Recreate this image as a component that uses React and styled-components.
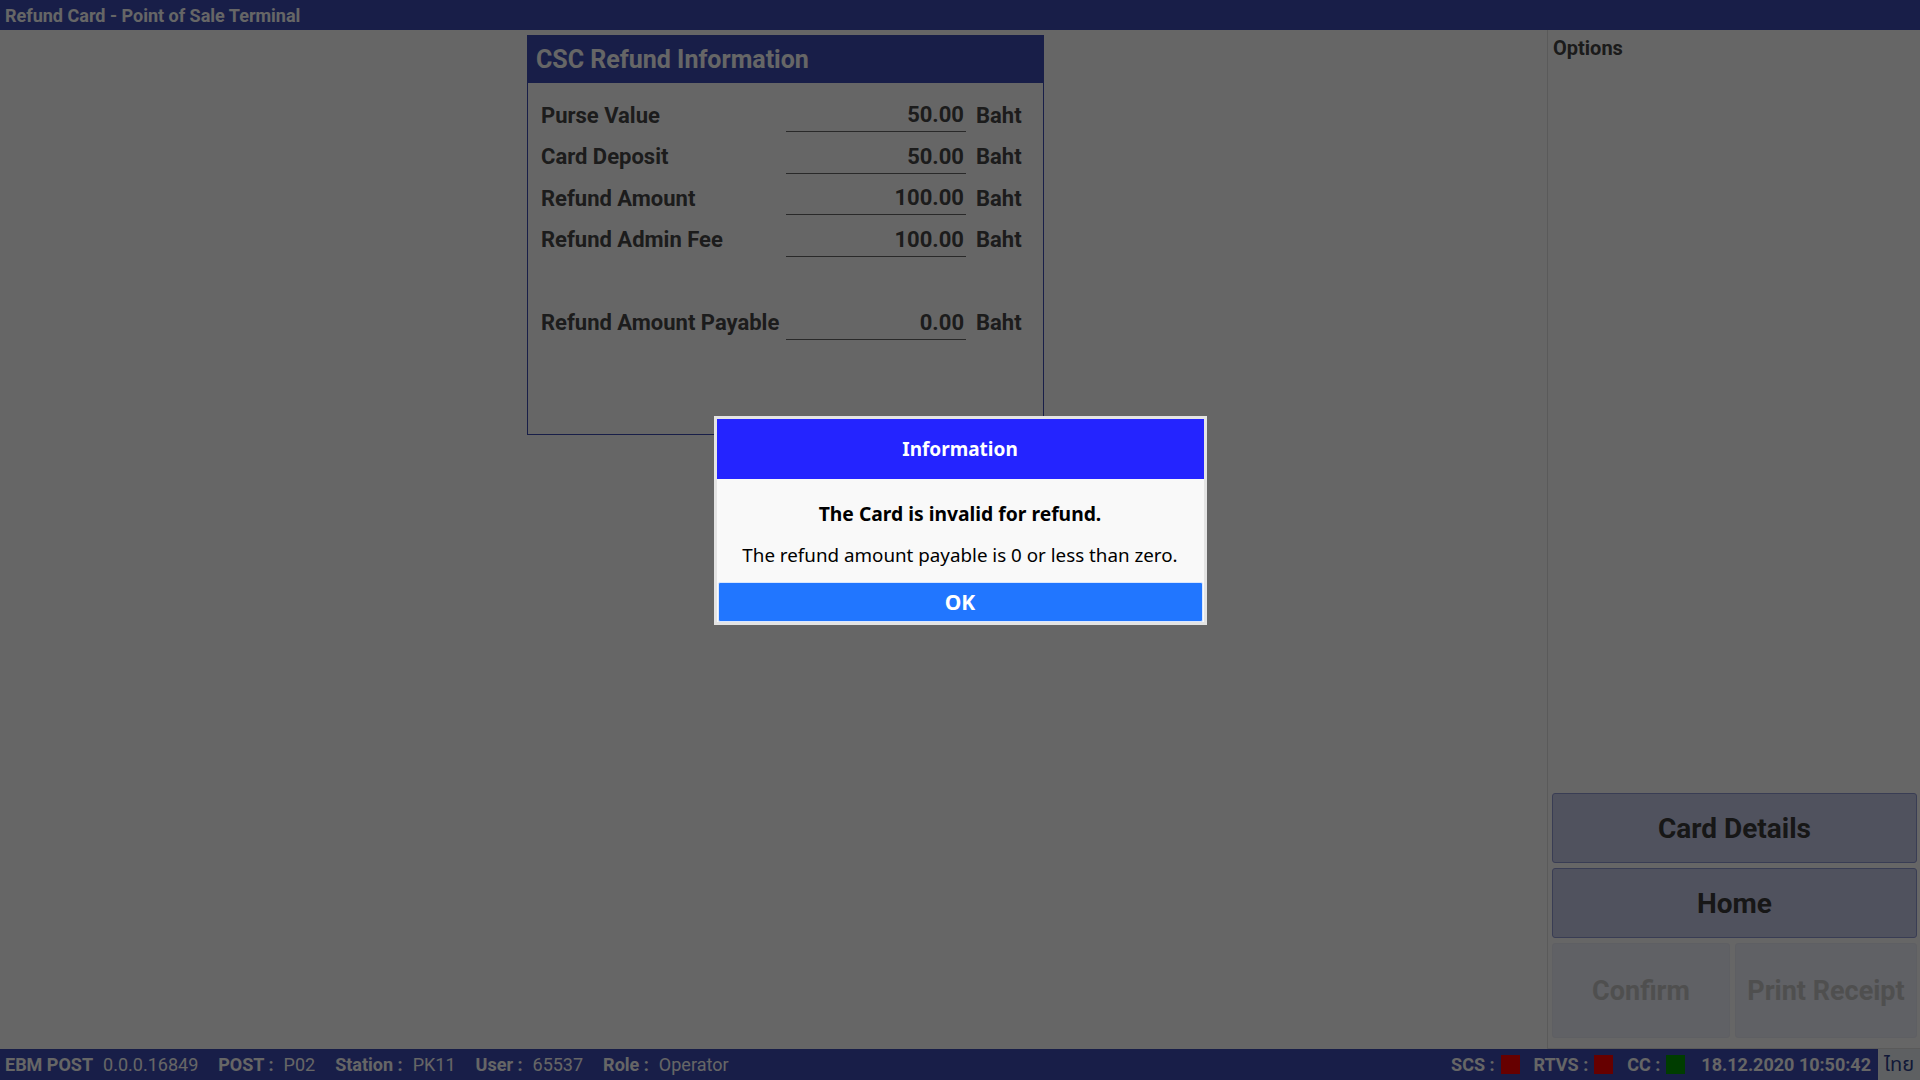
import React from 'react';
import styled, { createGlobalStyle } from 'styled-components';

const GlobalStyle = createGlobalStyle`
  html, body {
    margin: 0;
    padding: 0;
  }
  body {
    font-family: Roboto, "Liberation Sans", sans-serif;
    background: #ffffff;
    overflow: hidden;
  }
  * {
    box-sizing: border-box;
  }
`;

const Screen = styled.div`
  position: relative;
  width: 1920px;
  height: 1080px;
  display: flex;
  flex-direction: column;
  background: #ffffff;
`;

const TitleBar = styled.div`
  height: 30px;
  flex-shrink: 0;
  display: flex;
  align-items: center;
  padding-left: 5px;
  background: #3c4bb4;
  color: #ffffff;
  font-size: 18px;
  font-weight: 700;
`;

const Main = styled.div`
  flex: 1;
  display: flex;
  min-height: 0;
`;

const Content = styled.div`
  flex: 1;
  padding: 5px 0 0 527px;
`;

const Panel = styled.div`
  width: 517px;
  height: 400px;
  border: 1px solid #3c4bb4;
  display: flex;
  flex-direction: column;
`;

const PanelHeader = styled.div`
  height: 47px;
  display: flex;
  align-items: center;
  padding-left: 8px;
  background: #3c4bb4;
  color: #ffffff;
  font-size: 25px;
  font-weight: 700;
`;

const PanelBody = styled.div`
  padding: 15px 0 0 13px;
`;

const Row = styled.div`
  display: grid;
  grid-template-columns: 235px 180px auto;
  column-gap: 10px;
  align-items: center;
  height: 34px;
  margin-bottom: ${p => (p.$last ? '0' : '7.5px')};
  margin-top: ${p => (p.$spaced ? '49px' : '0')};
  font-size: 22px;
  font-weight: 700;
  color: #484848;
`;

const Label = styled.div`
  white-space: nowrap;
`;

const ValueField = styled.div`
  height: 34px;
  display: flex;
  align-items: center;
  justify-content: flex-end;
  padding-right: 2px;
  border-bottom: 1.5px solid #666666;
`;

const Unit = styled.div``;

const SidePanel = styled.div`
  width: 373px;
  flex-shrink: 0;
  display: flex;
  flex-direction: column;
  padding: 6px 3px 10px 4px;
  border-left: 1px solid #e2e2e2;
  border-bottom: 1px solid #e2e2e2;
`;

const SideTitle = styled.div`
  padding-left: 1px;
  font-size: 20px;
  font-weight: 700;
  color: #444444;
`;

const ActionStack = styled.div`
  margin-top: auto;
  display: flex;
  flex-direction: column;
  gap: 5px;
`;

const ActionButton = styled.div`
  height: 70px;
  display: flex;
  align-items: center;
  justify-content: center;
  border: 1px solid #8f98d2;
  border-radius: 3px;
  background: #c8cdeb;
  color: #3a3a3a;
  font-size: 28px;
  font-weight: 700;
`;

const ActionRow = styled.div`
  display: grid;
  grid-template-columns: 178px 1fr;
  gap: 5px;
`;

const DisabledButton = styled.div`
  height: 95px;
  display: flex;
  align-items: center;
  justify-content: center;
  border: 1px solid #ebedf8;
  border-radius: 3px;
  background: #f0f2fc;
  color: #c6c6c6;
  font-size: 27px;
  font-weight: 700;
`;

const StatusBar = styled.div`
  height: 31px;
  flex-shrink: 0;
  display: flex;
  align-items: center;
  padding-left: 5px;
  background: #3c4bb4;
  color: #ffffff;
  font-size: 18px;
`;

const StatusGroup = styled.div`
  display: flex;
  align-items: center;
  gap: ${p => p.$gap || '10px'};
  margin-right: ${p => p.$space || '20px'};
`;

const StatusLabel = styled.span`
  font-weight: 700;
`;

const StatusValue = styled.span``;

const Spacer = styled.div`
  flex: 1;
`;

const Indicator = styled.span`
  display: inline-block;
  width: 19px;
  height: 19px;
  background: ${p => p.$color};
`;

const Clock = styled.span`
  font-weight: 700;
  font-size: 18px;
  margin-right: 7px;
`;

const LangButton = styled.div`
  width: 42px;
  height: 31px;
  display: flex;
  align-items: center;
  justify-content: center;
  background: #eceff5;
  color: #2b3f8c;
  font-family: "Noto Sans Thai", "Noto Sans", "DejaVu Sans", sans-serif;
  font-size: 20px;
`;

const Overlay = styled.div`
  position: absolute;
  inset: 0;
  background: rgba(0, 0, 0, 0.6);
  display: flex;
  justify-content: center;
  align-items: flex-start;
  padding: 416px 0 0 0;
`;

const Dialog = styled.div`
  width: 493px;
  border: 3px solid #e4e4e4;
  background: #f9f9f9;
  font-family: "Noto Sans", "Open Sans", sans-serif;
`;

const DialogHeader = styled.div`
  height: 60px;
  display: flex;
  align-items: center;
  justify-content: center;
  background: #2424ff;
  color: #ffffff;
  font-size: 19px;
  font-weight: 700;
`;

const DialogTitle = styled.div`
  margin-top: 22px;
  line-height: 26px;
  text-align: center;
  font-size: 19.3px;
  font-weight: 700;
  color: #000000;
`;

const DialogText = styled.div`
  margin-top: 15px;
  line-height: 26px;
  text-align: center;
  font-size: 18.8px;
  color: #000000;
`;

const OkButton = styled.div`
  height: 40px;
  margin: 14px 1px 0 1px;
  display: flex;
  align-items: center;
  justify-content: center;
  border: 1px solid #d8e6ff;
  border-radius: 2px;
  background: #2176ff;
  color: #ffffff;
  font-size: 21px;
  font-weight: 700;
`;

const rows = [
  { label: 'Purse Value', value: '50.00' },
  { label: 'Card Deposit', value: '50.00' },
  { label: 'Refund Amount', value: '100.00' },
  { label: 'Refund Admin Fee', value: '100.00' },
];

export default function App() {
  return (
    <Screen>
      <GlobalStyle />
      <TitleBar>Refund Card - Point of Sale Terminal</TitleBar>
      <Main>
        <Content>
          <Panel>
            <PanelHeader>CSC Refund Information</PanelHeader>
            <PanelBody>
              {rows.map(r => (
                <Row key={r.label}>
                  <Label>{r.label}</Label>
                  <ValueField>{r.value}</ValueField>
                  <Unit>Baht</Unit>
                </Row>
              ))}
              <Row $spaced $last>
                <Label>Refund Amount Payable</Label>
                <ValueField>0.00</ValueField>
                <Unit>Baht</Unit>
              </Row>
            </PanelBody>
          </Panel>
        </Content>
        <SidePanel>
          <SideTitle>Options</SideTitle>
          <ActionStack>
            <ActionButton>Card Details</ActionButton>
            <ActionButton>Home</ActionButton>
            <ActionRow>
              <DisabledButton>Confirm</DisabledButton>
              <DisabledButton>Print Receipt</DisabledButton>
            </ActionRow>
          </ActionStack>
        </SidePanel>
      </Main>
      <StatusBar>
        <StatusGroup>
          <StatusLabel>EBM POST</StatusLabel>
          <StatusValue>0.0.0.16849</StatusValue>
        </StatusGroup>
        <StatusGroup>
          <StatusLabel>POST :</StatusLabel>
          <StatusValue>P02</StatusValue>
        </StatusGroup>
        <StatusGroup>
          <StatusLabel>Station :</StatusLabel>
          <StatusValue>PK11</StatusValue>
        </StatusGroup>
        <StatusGroup>
          <StatusLabel>User :</StatusLabel>
          <StatusValue>65537</StatusValue>
        </StatusGroup>
        <StatusGroup>
          <StatusLabel>Role :</StatusLabel>
          <StatusValue>Operator</StatusValue>
        </StatusGroup>
        <Spacer />
        <StatusGroup $gap="6px" $space="14px">
          <StatusLabel>SCS :</StatusLabel>
          <Indicator $color="#ff0000" />
        </StatusGroup>
        <StatusGroup $gap="6px" $space="14px">
          <StatusLabel>RTVS :</StatusLabel>
          <Indicator $color="#ff0000" />
        </StatusGroup>
        <StatusGroup $gap="6px" $space="16px">
          <StatusLabel>CC :</StatusLabel>
          <Indicator $color="#009900" />
        </StatusGroup>
        <Clock>18.12.2020 10:50:42</Clock>
        <LangButton>ไทย</LangButton>
      </StatusBar>
      <Overlay>
        <Dialog>
          <DialogHeader>Information</DialogHeader>
          <DialogTitle>The Card is invalid for refund.</DialogTitle>
          <DialogText>The refund amount payable is 0 or less than zero.</DialogText>
          <OkButton>OK</OkButton>
        </Dialog>
      </Overlay>
    </Screen>
  );
}
